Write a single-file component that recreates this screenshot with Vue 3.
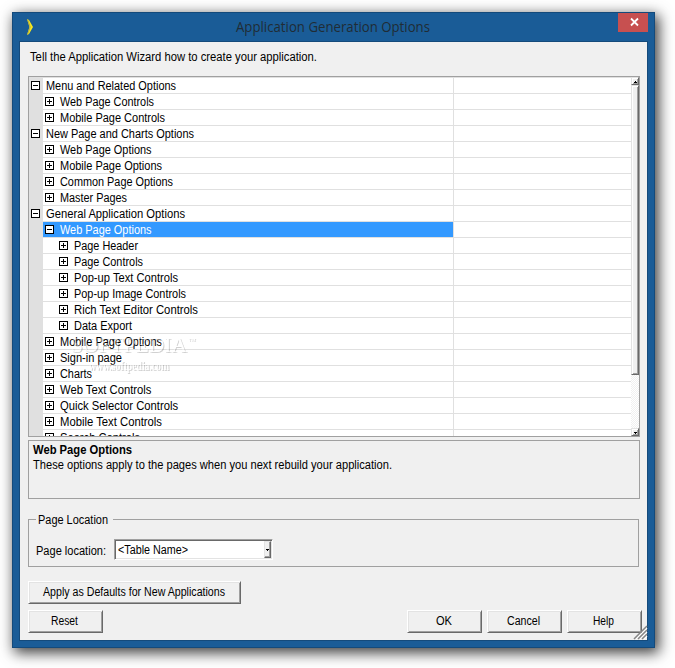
<script setup>
const rows = [
  ['Menu and Related Options', 0, true, 130],
  ['Web Page Controls', 1, false, 94],
  ['Mobile Page Controls', 1, false, 105],
  ['New Page and Charts Options', 0, true, 148],
  ['Web Page Options', 1, false, 91.5],
  ['Mobile Page Options', 1, false, 102],
  ['Common Page Options', 1, false, 113],
  ['Master Pages', 1, false, 67],
  ['General Application Options', 0, true, 139],
  ['Web Page Options', 1, true, 91.5],
  ['Page Header', 2, false, 64],
  ['Page Controls', 2, false, 69],
  ['Pop-up Text Controls', 2, false, 104],
  ['Pop-up Image Controls', 2, false, 112],
  ['Rich Text Editor Controls', 2, false, 124],
  ['Data Export', 2, false, 58],
  ['Mobile Page Options', 1, false, 102],
  ['Sign-in page', 1, false, 62],
  ['Charts', 1, false, 32],
  ['Web Text Controls', 1, false, 91.5],
  ['Quick Selector Controls', 1, false, 118],
  ['Mobile Text Controls', 1, false, 102],
  ['Search Controls', 1, false, 80]
].map(([label, level, open, width], index) => ({ label, level, open, width, selected: index === 9 }))
</script>

<template>
  <main class="desktop">
    <section class="window">
      <header class="titlebar">
        <svg class="logo" width="8" height="17" viewBox="0 0 8 17">
          <path d="M0 0 L2 1 L6 8 L2 15 L0 16 L2.4 8 Z" fill="#f7e81e" />
          <path d="M.6 .6 L3.2 8 L.6 15.4" fill="none" stroke="#a8a04a" stroke-width=".8" />
        </svg>
        <h1><svg width="196" height="22"><text x="0" y="16" textLength="194" lengthAdjust="spacingAndGlyphs">Application Generation Options</text></svg></h1>
        <button class="close" aria-label="Close">
          <svg width="9" height="8" viewBox="0 0 9 8"><path d="M1 .5 L8 7.5 M8 .5 L1 7.5" stroke="#fff" stroke-width="1.8" /></svg>
        </button>
      </header>
      <div class="client">
        <p class="intro"><svg width="290" height="16"><text x="0" y="12" textLength="287" lengthAdjust="spacingAndGlyphs">Tell the Application Wizard how to create your application.</text></svg></p>

        <div class="grid">
          <div class="rows">
            <div v-for="(row, i) in rows" :key="i" class="row" :class="['level' + row.level, { selected: row.selected }]">
              <div class="name">
                <svg class="toggle" width="9" height="9" shape-rendering="crispEdges">
                  <rect x=".5" y=".5" width="8" height="8" fill="#fff" stroke="#000" />
                  <path :d="row.open ? 'M2 4.5H7' : 'M2 4.5H7M4.5 2V7'" stroke="#000" />
                </svg>
                <svg class="label" :width="row.width + 4" height="15"><text x="0" y="12" :textLength="row.width" lengthAdjust="spacingAndGlyphs">{{ row.label }}</text></svg>
              </div>
              <div class="value"></div>
            </div>
          </div>
          <div class="scrollbar">
            <div class="arrow"><svg width="3" height="2" shape-rendering="crispEdges"><path d="M1 0H2V1H3V2H0V1H1Z" /></svg></div>
            <div class="thumb"></div>
            <div class="track"></div>
            <div class="arrow"><svg width="3" height="2" shape-rendering="crispEdges"><path d="M0 0H3V1H2V2H1V1H0Z" /></svg></div>
          </div>
          <div class="watermark">
            <svg width="134" height="42">
              <text class="brand" x="1" y="17" textLength="116" lengthAdjust="spacingAndGlyphs">SOFTPEDIA</text>
              <text class="tm" x="118" y="6">TM</text>
              <text class="site" x="19" y="35" textLength="80" lengthAdjust="spacingAndGlyphs">www.softpedia.com</text>
            </svg>
          </div>
        </div>

        <div class="description">
          <svg width="600" height="34">
            <text class="bold" x="0" y="12" textLength="99" lengthAdjust="spacingAndGlyphs">Web Page Options</text>
            <text x="0" y="27" textLength="359" lengthAdjust="spacingAndGlyphs">These options apply to the pages when you next rebuild your application.</text>
          </svg>
        </div>

        <fieldset class="group">
          <legend><svg width="72" height="15"><text x="0" y="12" textLength="70" lengthAdjust="spacingAndGlyphs">Page Location</text></svg></legend>
          <div class="field">
            <svg width="78" height="16"><text x="0" y="13" textLength="70" lengthAdjust="spacingAndGlyphs">Page location:</text></svg>
            <div class="combo">
              <svg width="148" height="17"><text x="1" y="13" textLength="70" lengthAdjust="spacingAndGlyphs">&lt;Table Name&gt;</text></svg>
              <div class="drop"><svg width="3" height="2" shape-rendering="crispEdges"><path d="M0 0H3V1H2V2H1V1H0Z" /></svg></div>
            </div>
          </div>
        </fieldset>

        <button class="btn wide"><svg width="182" height="16"><text x="0" y="12" textLength="182" lengthAdjust="spacingAndGlyphs">Apply as Defaults for New Applications</text></svg></button>
        <footer class="actions">
          <button class="btn"><svg width="27" height="16"><text x="0" y="12" textLength="27" lengthAdjust="spacingAndGlyphs">Reset</text></svg></button>
          <span class="spacer"></span>
          <button class="btn"><svg width="16" height="16"><text x="0" y="12" textLength="16" lengthAdjust="spacingAndGlyphs">OK</text></svg></button>
          <button class="btn"><svg width="33" height="16"><text x="0" y="12" textLength="33" lengthAdjust="spacingAndGlyphs">Cancel</text></svg></button>
          <button class="btn"><svg width="22" height="16"><text x="0" y="12" textLength="21" lengthAdjust="spacingAndGlyphs">Help</text></svg></button>
        </footer>
        <svg class="grip" width="13" height="13">
          <path d="M2 13L13 2M6 13L13 6M10 13L13 10" stroke="#fff" stroke-width="1.4" />
          <path d="M0 13L13 0M4 13L13 4M8 13L13 8" stroke="#858585" stroke-width="1.5" />
        </svg>
      </div>
    </section>
  </main>
</template>

<style>
body { margin: 0; background: #fff; overflow: hidden; }
</style>

<style scoped>
* { box-sizing: border-box; }
svg { display: block; flex: none; overflow: visible; }
.desktop {
  width: 675px; height: 668px; padding: 12px; background: #fff; overflow: hidden;
  font: 12px/15px "Liberation Sans", Arial, sans-serif; color: #000;
}
text { fill: #000; }
.window {
  width: 643px; height: 636px; padding: 0 6px 6px; border: 1px solid #144a7b;
  background: #1a5c97; box-shadow: 3px 4px 13px 1px rgba(0, 0, 0, .75);
}
.titlebar { display: flex; height: 28px; margin-right: -6px; }
.logo { margin: 6px 0 0 8px; }
h1 { margin: 3px 0 0 201px; flex: 1; font: 14px/22px "Open Sans", sans-serif; }
h1 text { fill: #202c35; }
.close {
  display: flex; align-items: center; justify-content: center; width: 30px; height: 19px;
  margin-right: 6px; padding: 0 0 1px 2px; border: 0; background: #c75050;
}
.client {
  position: relative; width: 629px; height: 600px; padding: 0 7px 0 8px;
  border: 1px solid #144a7b; background: #f0f0f0;
}
.intro { height: 34px; margin: 0; padding: 7px 0 0 2px; }
.grid {
  position: relative; display: flex; width: 612px; height: 361px;
  border: 1px solid #a0a0a0; background: #fff; overflow: hidden;
}
.rows {
  flex: 1; height: 359px; border-top: 1px solid #e0e0e0;
  background: linear-gradient(90deg, #e0e0e0 14px, #fff 14px); overflow: hidden;
}
.row { display: flex; height: 16px; }
.name { display: flex; width: 411px; margin-left: 14px; padding-left: 2px; border-bottom: 1px solid #e0e0e0; }
.value { flex: 1; margin-left: -1px; border-left: 1px solid #e0e0e0; border-bottom: 1px solid #e0e0e0; }
.toggle { margin-top: 3px; }
.label { margin-left: 6px; }
.level0 .toggle { margin-left: -14px; }
.level2 .toggle { margin-left: 14px; }
.selected .name { background: #3399ff; background-clip: padding-box; }
.selected text { fill: #fff; }
.scrollbar { display: flex; flex-direction: column; width: 8px; height: 359px; }
.arrow {
  display: flex; align-items: center; justify-content: center; height: 8px; padding: 1px 0 0 1px;
  border: 1px solid; border-color: #e3e3e3 #696969 #696969 #e3e3e3;
  box-shadow: inset 1px 1px #fff, inset -1px -1px #a0a0a0; background: #f0f0f0;
}
.thumb {
  height: 290px; border: 1px solid; border-color: #e3e3e3 #696969 #696969 #e3e3e3;
  box-shadow: inset 1px 1px #fff, inset -1px -1px #a0a0a0; background: #f0f0f0;
}
.track { flex: 1; background: repeating-conic-gradient(#f0f0f0 0 25%, #fff 0 50%) 0 0 / 2px 2px; }
.watermark { position: absolute; left: 41px; top: 258px; }
.watermark svg { filter: drop-shadow(1px 1px .6px rgba(0, 0, 0, .5)); opacity: .36; }
.watermark text { font-family: "Liberation Serif", serif; fill: #fff; }
.brand { font-size: 22px; }
.watermark .tm { font-size: 5px; }
.watermark .site { font-size: 12px; font-weight: bold; }
.description { width: 612px; height: 59px; margin-top: 3px; padding: 1px 4px; border: 1px solid #a0a0a0; }
.bold { font-weight: bold; }
.group {
  width: 611px; height: 55px; margin: 13px 0 0; padding: 0 7px; border: 1px solid #a0a0a0;
  min-width: 0;
}
legend { width: 77px; height: 15px; margin: 0; padding: 0 0 0 2px; }
.field { display: flex; padding-top: 12px; }
.field > svg { margin-top: 3px; }
.combo {
  display: flex; width: 159px; height: 21px; border: 1px solid; border-color: #a0a0a0 #fff #fff #a0a0a0;
  box-shadow: inset 1px 1px #696969, inset -1px -1px #e3e3e3; background: #fff; padding: 1px;
}
.combo > svg { margin-left: 1px; }
.drop {
  display: flex; align-items: center; justify-content: center; width: 8px; height: 17px; margin-left: -1px;
  border: 1px solid; border-color: #e3e3e3 #696969 #696969 #e3e3e3; background: #f0f0f0;
  box-shadow: inset -1px -1px #a0a0a0;
}
.btn {
  display: flex; align-items: center; justify-content: center; width: 75px; height: 23px; padding: 0 2px 1px 0;
  border: 1px solid; border-color: #fff #696969 #696969 #fff; background: #f0f0f0; font: inherit;
  box-shadow: inset 1px 1px #e3e3e3, inset -1px -1px #a0a0a0;
}
.wide { width: 213px; margin-top: 14px; padding-right: 2px; }
.actions { display: flex; gap: 5px; width: 614px; margin-top: 6px; }
.spacer { flex: 1; }
.grip { position: absolute; right: 0; bottom: 1px; }
</style>
